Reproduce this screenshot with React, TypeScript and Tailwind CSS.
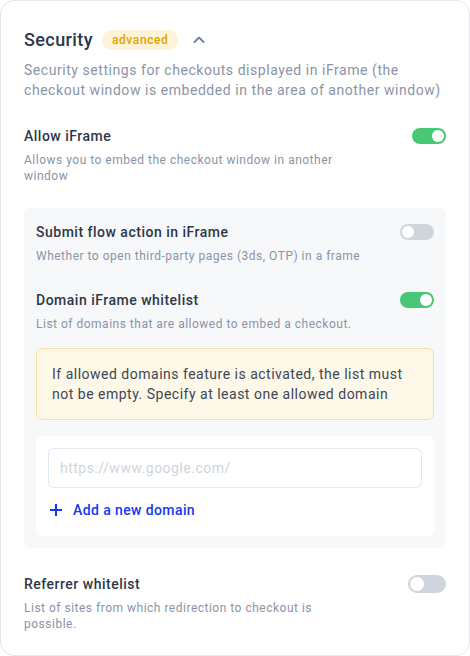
import React from "react";

function Toggle({ on, big }: { on: boolean; big?: boolean }) {
  const size = big ? "w-[38px] h-[18px]" : "w-[34px] h-[16px]";
  const knob = big ? "w-[14px] h-[14px]" : "w-[12px] h-[12px]";
  return (
    <div
      className={`${size} rounded-full flex items-center px-[2px] shrink-0 ${
        on ? "bg-[#48c774] justify-end" : "bg-[#cfd5dd] justify-start"
      }`}
    >
      <div className={`${knob} rounded-full bg-white`} />
    </div>
  );
}

function SettingRow({
  title,
  desc,
  on,
  big,
}: {
  title: string;
  desc: string;
  on: boolean;
  big?: boolean;
}) {
  return (
    <div className="flex flex-col gap-[6px]">
      <div className="flex items-center justify-between h-[20px]">
        <div className="text-[14px] leading-[20px] font-medium text-[#2d3748] tracking-[0.5px]">
          {title}
        </div>
        <Toggle on={on} big={big} />
      </div>
      <div className="text-[12px] leading-[16px] text-[#8a94a6] tracking-[0.5px] max-w-[336px]">
        {desc}
      </div>
    </div>
  );
}

export default function App() {
  return (
    <div
      className="w-[470px] h-[656px] bg-white"
      style={{ fontFamily: "Roboto, 'Noto Sans', sans-serif" }}
    >
      <div className="w-full h-full border border-[#e5e7eb] rounded-[14px] px-[23px] pt-[25px] flex flex-col">
        <div className="flex items-center h-[28px]">
          <div className="text-[18px] leading-[28px] font-medium text-[#2d3748] tracking-[0.4px]">
            Security
          </div>
          <div className="ml-[9px] h-[20px] px-[10px] rounded-full bg-[#fef3d4] text-[#e0a500] text-[12px] leading-[20px] font-medium tracking-[0.6px]">
            advanced
          </div>
          <svg
            className="ml-[14px]"
            width="14"
            height="14"
            viewBox="0 0 14 14"
            fill="none"
            stroke="#718096"
            strokeWidth="1.8"
            strokeLinecap="round"
            strokeLinejoin="round"
          >
            <path d="M2.5 9 L7 4.5 L11.5 9" />
          </svg>
        </div>
        <div className="mt-[6px] text-[14px] leading-[20px] text-[#8a94a6] tracking-[0.55px]">
          Security settings for checkouts displayed in iFrame (the checkout
          window is embedded in the area of another window)
        </div>

        <div className="mt-[26px]">
          <SettingRow
            title="Allow iFrame"
            desc="Allows you to embed the checkout window in another window"
            on={true}
          />
        </div>

        <div className="mt-[24px] bg-[#f7f8fa] rounded-[6px] px-[12px] pt-[14px] pb-[12px] flex flex-col">
          <SettingRow
            title="Submit flow action in iFrame"
            desc="Whether to open third-party pages (3ds, OTP) in a frame"
            on={false}
          />
          <div className="mt-[26px]">
            <SettingRow
              title="Domain iFrame whitelist"
              desc="List of domains that are allowed to embed a checkout."
              on={true}
            />
          </div>
          <div className="mt-[16px] bg-[#fef8e9] border border-[#f3e1a6] rounded-[6px] px-[15px] py-[15px] text-[14px] leading-[20px] text-[#3c4656] tracking-[0.5px]">
            If allowed domains feature is activated, the list must not be
            empty. Specify at least one allowed domain
          </div>
          <div className="mt-[16px] bg-white rounded-[6px] px-[12px] pt-[12px] pb-[16px] flex flex-col">
            <div className="h-[40px] border border-[#e2e8f0] rounded-[6px] flex items-center px-[11px] text-[14px] text-[#cfd5dd] tracking-[0.5px]">
              https://www.google.com/
            </div>
            <div className="mt-[12px] h-[20px] flex items-center text-[#1337f2]">
              <svg
                className="ml-[2px]"
                width="12"
                height="12"
                viewBox="0 0 12 12"
                fill="none"
                stroke="#1337f2"
                strokeWidth="2"
              >
                <path d="M6 0 V12 M0 6 H12" />
              </svg>
              <span className="ml-[11px] text-[14px] leading-[20px] font-medium tracking-[0.4px]">
                Add a new domain
              </span>
            </div>
          </div>
        </div>

        <div className="mt-[26px]">
          <SettingRow
            title="Referrer whitelist"
            desc="List of sites from which redirection to checkout is possible."
            on={false}
            big
          />
        </div>
      </div>
    </div>
  );
}
